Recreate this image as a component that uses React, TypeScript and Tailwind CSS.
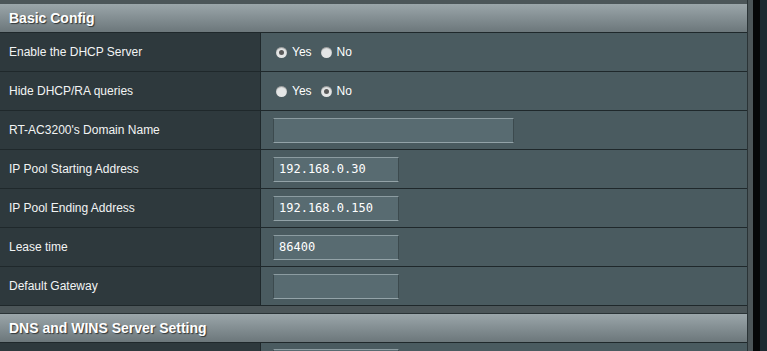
const rows: { label: string; kind: 'radio' | 'input'; value?: string; yes?: boolean; wide?: boolean }[] = [
    { label: 'Enable the DHCP Server', kind: 'radio', yes: true },
    { label: 'Hide DHCP/RA queries', kind: 'radio', yes: false },
    { label: "RT-AC3200's Domain Name", kind: 'input', value: '', wide: true },
    { label: 'IP Pool Starting Address', kind: 'input', value: '192.168.0.30' },
    { label: 'IP Pool Ending Address', kind: 'input', value: '192.168.0.150' },
    { label: 'Lease time', kind: 'input', value: '86400' },
    { label: 'Default Gateway', kind: 'input', value: '' },
];

const Radio = ({ checked, label }: { checked: boolean; label: string }) => (
    <span className="flex items-center">
        <span className="w-[11px] h-[11px] rounded-full bg-[#e4e6e6] flex items-center justify-center shadow-[inset_0_1px_1px_rgba(0,0,0,0.35)]">
            {checked && <span className="w-[5px] h-[5px] rounded-full bg-[#5a5a5a]" />}
        </span>
        <span className="ml-[5px] text-[12px] text-white">{label}</span>
    </span>
);

const SectionHeader = ({ title }: { title: string }) => (
    <div className="h-[29px] flex items-center pl-[9px] bg-gradient-to-b from-[#9ba6aa] to-[#6c777b] border-b border-[#1f282b]">
        <span className="text-[14px] font-bold text-white [text-shadow:1px_1px_1px_rgba(0,0,0,0.6)]">{title}</span>
    </div>
);

const App = () => {
    return (
        <div className="w-[767px] h-[351px] overflow-hidden bg-[#4c5659] flex font-['Liberation_Sans',Arial,sans-serif]">
            <div className="w-[748px] pt-[4px] border-r border-[#2a3336]">
                <SectionHeader title="Basic Config" />
                {rows.map(row => (
                    <div key={row.label} className="flex h-[39px] border-b border-[#1f282b]">
                        <div className="w-[261px] bg-[#2e393d] border-r border-[#1f282b] flex items-center pl-[9px] text-[12px] text-[#f2f4f4]">
                            {row.label}
                        </div>
                        <div className="flex-1 bg-[#4a5b60] flex items-center pl-[12px]">
                            {row.kind === 'radio' ? (
                                <div className="flex items-center gap-[9px] pl-[3px]">
                                    <Radio checked={!!row.yes} label="Yes" />
                                    <Radio checked={!row.yes} label="No" />
                                </div>
                            ) : (
                                <div className={`${row.wide ? 'w-[241px]' : 'w-[126px]'} h-[25px] bg-[#586b71] border border-t-[#8c9ca1] border-b-[#93a3a8] border-x-[#3c4a4e] flex items-center pl-[5px] text-[12px] text-white font-['DejaVu_Sans_Mono',monospace]`}>
                                    {row.value}
                                </div>
                            )}
                        </div>
                    </div>
                ))}
                <div className="h-[8px] border-b border-[#2a3336]" />
                <SectionHeader title="DNS and WINS Server Setting" />
                <div className="flex h-[39px] border-b border-[#1f282b]">
                    <div className="w-[261px] bg-[#2e393d] border-r border-[#1f282b]" />
                    <div className="flex-1 bg-[#4a5b60] flex items-start pl-[12px] pt-[6px]">
                        <div className="w-[126px] h-[25px] bg-[#586b71] border border-t-[#8c9ca1] border-b-[#93a3a8] border-x-[#3c4a4e]" />
                    </div>
                </div>
            </div>
            <div className="w-[5px] bg-[#4c5659]" />
            <div className="w-[7px] bg-[#050708]" />
            <div className="flex-1 bg-[#1d2a31]" />
        </div>
    );
};

export default App;
